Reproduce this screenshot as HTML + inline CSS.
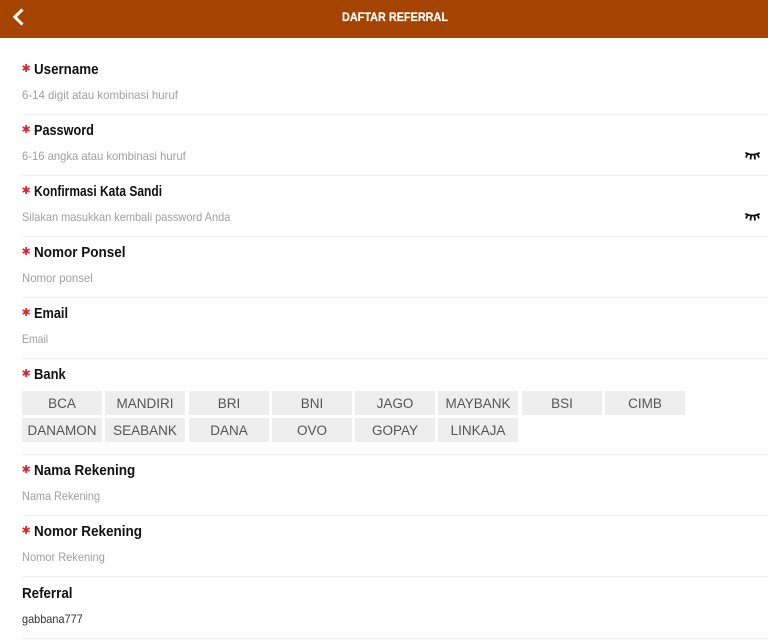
<!DOCTYPE html>
<html>
<head>
<meta charset="utf-8">
<style>
html,body{margin:0;padding:0;background:#fff;width:768px;height:640px;overflow:hidden;font-family:"Liberation Sans",sans-serif}
.a{position:absolute;white-space:nowrap}
#hd{position:absolute;left:0;top:0;width:768px;height:37.5px;background:#a54300}
.t{left:0;top:9px;width:790px;text-align:center;color:#fff;font-size:12px;line-height:16px;font-weight:bold;transform:scaleX(.905);transform-origin:395px 0;-webkit-text-stroke:.2px #fff}
.l{left:34px;font-size:15px;line-height:20px;font-weight:bold;color:#111;transform-origin:0 0}
.s{left:21.5px;width:9px;text-align:center;color:#dc2430;font-family:"DejaVu Sans",sans-serif;font-size:11px;line-height:12px;font-weight:bold}
.p{left:22px;font-size:12px;line-height:16px;color:#a0a0a0;transform-origin:0 0}
.h{left:22px;width:746px;height:1px;background:#f0f0f0}
.b{background:#eee;color:#555;font-size:13.5px;text-align:center;line-height:25px;height:24px;width:80px}
</style>
</head>
<body>
<div id="hd"></div>
<svg class="a" style="left:12px;top:8px" width="14" height="18" viewBox="0 0 14 18"><path d="M10.5 1.5 L2.8 9 L10.5 16.5" fill="none" stroke="#fff8ee" stroke-width="3"/></svg>
<div class="a t">DAFTAR REFERRAL</div>

<div class="a s" style="top:63px">✱</div><div class="a l" style="top:60px;transform:scaleX(.89)">Username</div>
<div class="a p" style="top:87px;transform:scaleX(.95)">6-14 digit atau kombinasi huruf</div>
<div class="a h" style="top:114px"></div>

<div class="a s" style="top:124px">✱</div><div class="a l" style="top:121px;transform:scaleX(.845)">Password</div>
<div class="a p" style="top:148px;transform:scaleX(.937)">6-16 angka atau kombinasi huruf</div>
<svg class="a" style="left:745px;top:152px" width="15" height="9" viewBox="0 0 15 9"><path d="M.3 .8 Q7.5 4.4 14.7 .8 M2.5 2 L1 5.5 M6 3 L5.5 7.5 M9.5 3 L10 7.5 M12.5 2 L14 5.5" fill="none" stroke="#111" stroke-width="1.8"/></svg>
<div class="a h" style="top:175px"></div>

<div class="a s" style="top:185px">✱</div><div class="a l" style="top:182px;transform:scaleX(.8)">Konfirmasi Kata Sandi</div>
<div class="a p" style="top:209px;transform:scaleX(.916)">Silakan masukkan kembali password Anda</div>
<svg class="a" style="left:745px;top:213px" width="15" height="9" viewBox="0 0 15 9"><path d="M.3 .8 Q7.5 4.4 14.7 .8 M2.5 2 L1 5.5 M6 3 L5.5 7.5 M9.5 3 L10 7.5 M12.5 2 L14 5.5" fill="none" stroke="#111" stroke-width="1.8"/></svg>
<div class="a h" style="top:236px"></div>

<div class="a s" style="top:246px">✱</div><div class="a l" style="top:243px;transform:scaleX(.9)">Nomor Ponsel</div>
<div class="a p" style="top:270px;transform:scaleX(.947)">Nomor ponsel</div>
<div class="a h" style="top:297px"></div>

<div class="a s" style="top:307px">✱</div><div class="a l" style="top:304px;transform:scaleX(.85)">Email</div>
<div class="a p" style="top:331px;transform:scaleX(.87)">Email</div>
<div class="a h" style="top:358px"></div>

<div class="a s" style="top:368px">✱</div><div class="a l" style="top:365px;transform:scaleX(.865)">Bank</div>
<div class="a b" style="left:22px;top:391px">BCA</div>
<div class="a b" style="left:105px;top:391px">MANDIRI</div>
<div class="a b" style="left:189px;top:391px">BRI</div>
<div class="a b" style="left:272px;top:391px">BNI</div>
<div class="a b" style="left:355px;top:391px">JAGO</div>
<div class="a b" style="left:438px;top:391px">MAYBANK</div>
<div class="a b" style="left:522px;top:391px">BSI</div>
<div class="a b" style="left:605px;top:391px">CIMB</div>
<div class="a b" style="left:22px;top:418px">DANAMON</div>
<div class="a b" style="left:105px;top:418px">SEABANK</div>
<div class="a b" style="left:189px;top:418px">DANA</div>
<div class="a b" style="left:272px;top:418px">OVO</div>
<div class="a b" style="left:355px;top:418px">GOPAY</div>
<div class="a b" style="left:438px;top:418px">LINKAJA</div>
<div class="a h" style="top:454px"></div>

<div class="a s" style="top:464px">✱</div><div class="a l" style="top:461px;transform:scaleX(.9)">Nama Rekening</div>
<div class="a p" style="top:488px;transform:scaleX(.907)">Nama Rekening</div>
<div class="a h" style="top:515px"></div>

<div class="a s" style="top:525px">✱</div><div class="a l" style="top:522px;transform:scaleX(.9)">Nomor Rekening</div>
<div class="a p" style="top:549px;transform:scaleX(.92)">Nomor Rekening</div>
<div class="a h" style="top:576px"></div>

<div class="a l" style="left:22px;top:584px;transform:scaleX(.89)">Referral</div>
<div class="a p" style="top:611px;color:#333;transform:scaleX(.91)">gabbana777</div>
<div class="a h" style="top:638px"></div>
</body>
</html>
